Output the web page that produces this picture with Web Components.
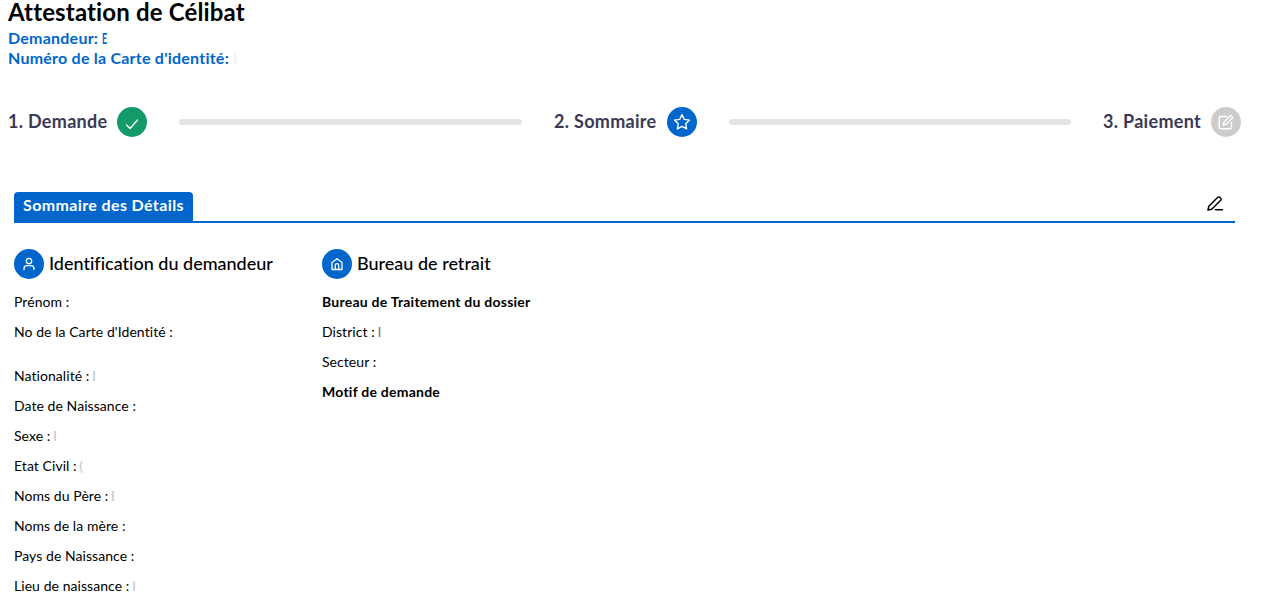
<!DOCTYPE html>
<html lang="fr">
<head>
<meta charset="utf-8">
<title>Attestation de Célibat</title>
<style>
  html, body { margin: 0; background: #fff; }
  body { font-family: Lato, "Noto Sans", sans-serif; color: #000; overflow: hidden; font-variant-ligatures: none; }
</style>
</head>
<body>
<request-header></request-header>
<step-bar>
  <step-item label="1. Demande" state="done"></step-item>
  <step-item label="2. Sommaire" state="current"></step-item>
  <step-item label="3. Paiement" state="todo"></step-item>
</step-bar>
<detail-tabs label="Sommaire des Détails">
  <detail-section heading="Identification du demandeur" icon="user">
    <detail-row>Prénom :</detail-row>
    <detail-row tall>No de la Carte d'Identité :</detail-row>
    <detail-row>Nationalité : <masked-value>I</masked-value></detail-row>
    <detail-row>Date de Naissance :</detail-row>
    <detail-row>Sexe : <masked-value>I</masked-value></detail-row>
    <detail-row>Etat Civil : <masked-value>(</masked-value></detail-row>
    <detail-row>Noms du Père : <masked-value>I</masked-value></detail-row>
    <detail-row>Noms de la mère :</detail-row>
    <detail-row>Pays de Naissance :</detail-row>
    <detail-row>Lieu de naissance : <masked-value>I</masked-value></detail-row>
  </detail-section>
  <detail-section heading="Bureau de retrait" icon="home">
    <detail-row strong>Bureau de Traitement du dossier</detail-row>
    <detail-row>District : <masked-value dark>I</masked-value></detail-row>
    <detail-row>Secteur :</detail-row>
    <detail-row strong>Motif de demande</detail-row>
  </detail-section>
</detail-tabs>

<script>
const ICONS = {
  done: '<path d="M9.500 18l3.500 3.500 7.500-8.500"/>',
  current: '<path d="M15 7.600l2.300 4.800 5.200.7-3.800 3.600.9 5.200-4.600-2.500-4.600 2.500.9-5.200-3.800-3.600 5.200-.7z"/>',
  todo: '<path d="M20.500 15.800v4.400a1.600 1.600 0 0 1-1.600 1.600H9.800a1.600 1.600 0 0 1-1.600-1.600v-9.100a1.600 1.600 0 0 1 1.600-1.600h5.400"/><path d="M19.600 8.400l2.200 2.200-6.600 6.600-2.900.7.7-2.900z"/>',
  user: '<circle cx="15" cy="12" r="2.700"/><path d="M10 20.500v-.8a3 3 0 0 1 3-3h4a3 3 0 0 1 3 3v.8"/>',
  home: '<path d="M10 20.500v-7L15 9.700l5 3.800v7z"/><path d="M13.300 20.500v-4.200a1.700 1.700 0 0 1 3.400 0v4.200"/>'
};

const REQUEST_HEADER_TEMPLATE = document.createElement('template');
REQUEST_HEADER_TEMPLATE.innerHTML = `
  <style>
    :host { display: block; padding-left: 8px; height: 107px; }
    h1 { margin: 0; font-size: 24px; line-height: 24px; font-weight: 700; letter-spacing: .15px; }
    p { margin: 0; font-size: 16px; line-height: 20px; font-weight: 700; color: #0066cc; letter-spacing: .23px; }
    p:first-of-type { margin-top: 4px; }
    .cut { display: inline-block; width: 5px; transform: scaleX(.55); transform-origin: left; }
    .faint { color: #eeeeee; font-weight: 400; }
  </style>
  <h1>Attestation de Célibat</h1>
  <p>Demandeur: <span class="cut">E</span></p>
  <p>Numéro de la Carte d'identité: <span class="faint">I</span></p>
`;

class RequestHeader extends HTMLElement {
  constructor() {
    super();
    this.attachShadow({ mode: 'open' });
    this.shadowRoot.appendChild(REQUEST_HEADER_TEMPLATE.content.cloneNode(true));
  }
}

const STEP_BAR_TEMPLATE = document.createElement('template');
STEP_BAR_TEMPLATE.innerHTML = `
  <style>
    :host { display: flex; justify-content: space-between; padding: 0 29px 0 8px; height: 30px; }
    ::slotted(step-item:not(:last-child)) { flex: 1 1 auto; }
  </style>
  <slot></slot>
`;

class StepBar extends HTMLElement {
  constructor() {
    super();
    this.attachShadow({ mode: 'open' });
    this.shadowRoot.appendChild(STEP_BAR_TEMPLATE.content.cloneNode(true));
  }
}

class StepItem extends HTMLElement {
  constructor() {
    super();
    this.attachShadow({ mode: 'open' });
    const state = this.getAttribute('state');
    const colour = { done: '#129a69', current: '#0066cc', todo: '#cccccc' }[state];
    this.shadowRoot.innerHTML = `
      <style>
        :host { display: flex; align-items: center; }
        .label { font-size: 18px; line-height: 28px; padding-bottom: 2px; font-weight: 700; letter-spacing: .3px; color: #3a3a57; margin-right: 10px; white-space: nowrap; }
        .dot { width: 30px; height: 30px; border-radius: 50%; background: ${colour}; flex: none; }
        svg { display: block; fill: none; stroke: #fff; stroke-width: 1.400; stroke-linecap: round; stroke-linejoin: round; }
        .line { flex: 1; height: 6px; border-radius: 3px; background: #e4e4e4; margin: 0 32px; }
        :host(:last-child) .line { display: none; }
      </style>
      <span class="label">${this.getAttribute('label')}</span>
      <span class="dot"><svg width="30" height="30" viewBox="0 0 30 30">${ICONS[state]}</svg></span>
      <span class="line"></span>
    `;
  }
}

const DETAIL_TABS_TEMPLATE = document.createElement('template');
DETAIL_TABS_TEMPLATE.innerHTML = `
  <style>
    :host { display: block; margin: 55px 35px 0 14px; }
    .head { display: flex; justify-content: space-between; border-bottom: 2px solid #0066cc; height: 29px; }
    .tab { background: #0066cc; color: #fff; font-size: 16px; line-height: 26px; padding: 0 9px 3px; font-weight: 700; letter-spacing: .38px; border-radius: 4px 4px 0 0; }
    svg { display: block; margin: 1px 10px 0 0; fill: none; stroke: #000; stroke-width: 1.500; stroke-linecap: round; stroke-linejoin: round; }
    .body { display: grid; grid-template-columns: 308px 1fr; padding-top: 26px; }
  </style>
  <div class="head">
    <div class="tab"></div>
    <svg width="20" height="20" viewBox="0 0 20 20"><path d="M3 17l.8-3.700L12.800 4.300a1.400 1.400 0 0 1 2 0l.9.900a1.400 1.400 0 0 1 0 2L6.700 16.200z"/><path d="M10.500 16.700h7"/></svg>
  </div>
  <div class="body"><slot></slot></div>
`;

class DetailTabs extends HTMLElement {
  constructor() {
    super();
    this.attachShadow({ mode: 'open' });
    this.shadowRoot.appendChild(DETAIL_TABS_TEMPLATE.content.cloneNode(true));
    this.shadowRoot.querySelector('.tab').textContent = this.getAttribute('label');
  }
}

class DetailSection extends HTMLElement {
  constructor() {
    super();
    this.attachShadow({ mode: 'open' });
    this.shadowRoot.innerHTML = `
      <style>
        :host { display: block; }
        h2 { display: flex; align-items: center; gap: 5px; margin: 0 0 13px; font-size: 18px; line-height: 28px; font-weight: 500; color: #000; }
        h2 .text { padding-bottom: 2px; }
        .dot { width: 30px; height: 30px; border-radius: 50%; background: #0066cc; flex: none; }
        svg { display: block; fill: none; stroke: #fff; stroke-width: 1.300; stroke-linecap: round; stroke-linejoin: round; }
      </style>
      <h2><span class="dot"><svg width="30" height="30" viewBox="0 0 30 30">${ICONS[this.getAttribute('icon')]}</svg></span><span class="text"></span></h2>
      <slot></slot>
    `;
    this.shadowRoot.querySelector('.text').textContent = this.getAttribute('heading');
  }
}

const DETAIL_ROW_TEMPLATE = document.createElement('template');
DETAIL_ROW_TEMPLATE.innerHTML = `
  <style>
    :host { display: block; font-size: 14px; line-height: 20px; margin-bottom: 10px; color: #000; white-space: nowrap; letter-spacing: .06px; }
    :host([strong]) { font-weight: 700; letter-spacing: .24px; }
    :host([tall]) { margin-bottom: 24px; }
  </style>
  <slot></slot>
`;

class DetailRow extends HTMLElement {
  constructor() {
    super();
    this.attachShadow({ mode: 'open' });
    this.shadowRoot.appendChild(DETAIL_ROW_TEMPLATE.content.cloneNode(true));
  }
}

// values are masked in the reference, only a pale sliver of the first letter shows
const MASKED_VALUE_TEMPLATE = document.createElement('template');
MASKED_VALUE_TEMPLATE.innerHTML = `
  <style>
    :host { color: #c4c4c4; margin-left: -1px; }
    :host([dark]) { color: #777; }
  </style>
  <slot></slot>
`;

class MaskedValue extends HTMLElement {
  constructor() {
    super();
    this.attachShadow({ mode: 'open' });
    this.shadowRoot.appendChild(MASKED_VALUE_TEMPLATE.content.cloneNode(true));
  }
}

customElements.define('request-header', RequestHeader);
customElements.define('step-bar', StepBar);
customElements.define('step-item', StepItem);
customElements.define('detail-tabs', DetailTabs);
customElements.define('detail-section', DetailSection);
customElements.define('detail-row', DetailRow);
customElements.define('masked-value', MaskedValue);
</script>
</body>
</html>
